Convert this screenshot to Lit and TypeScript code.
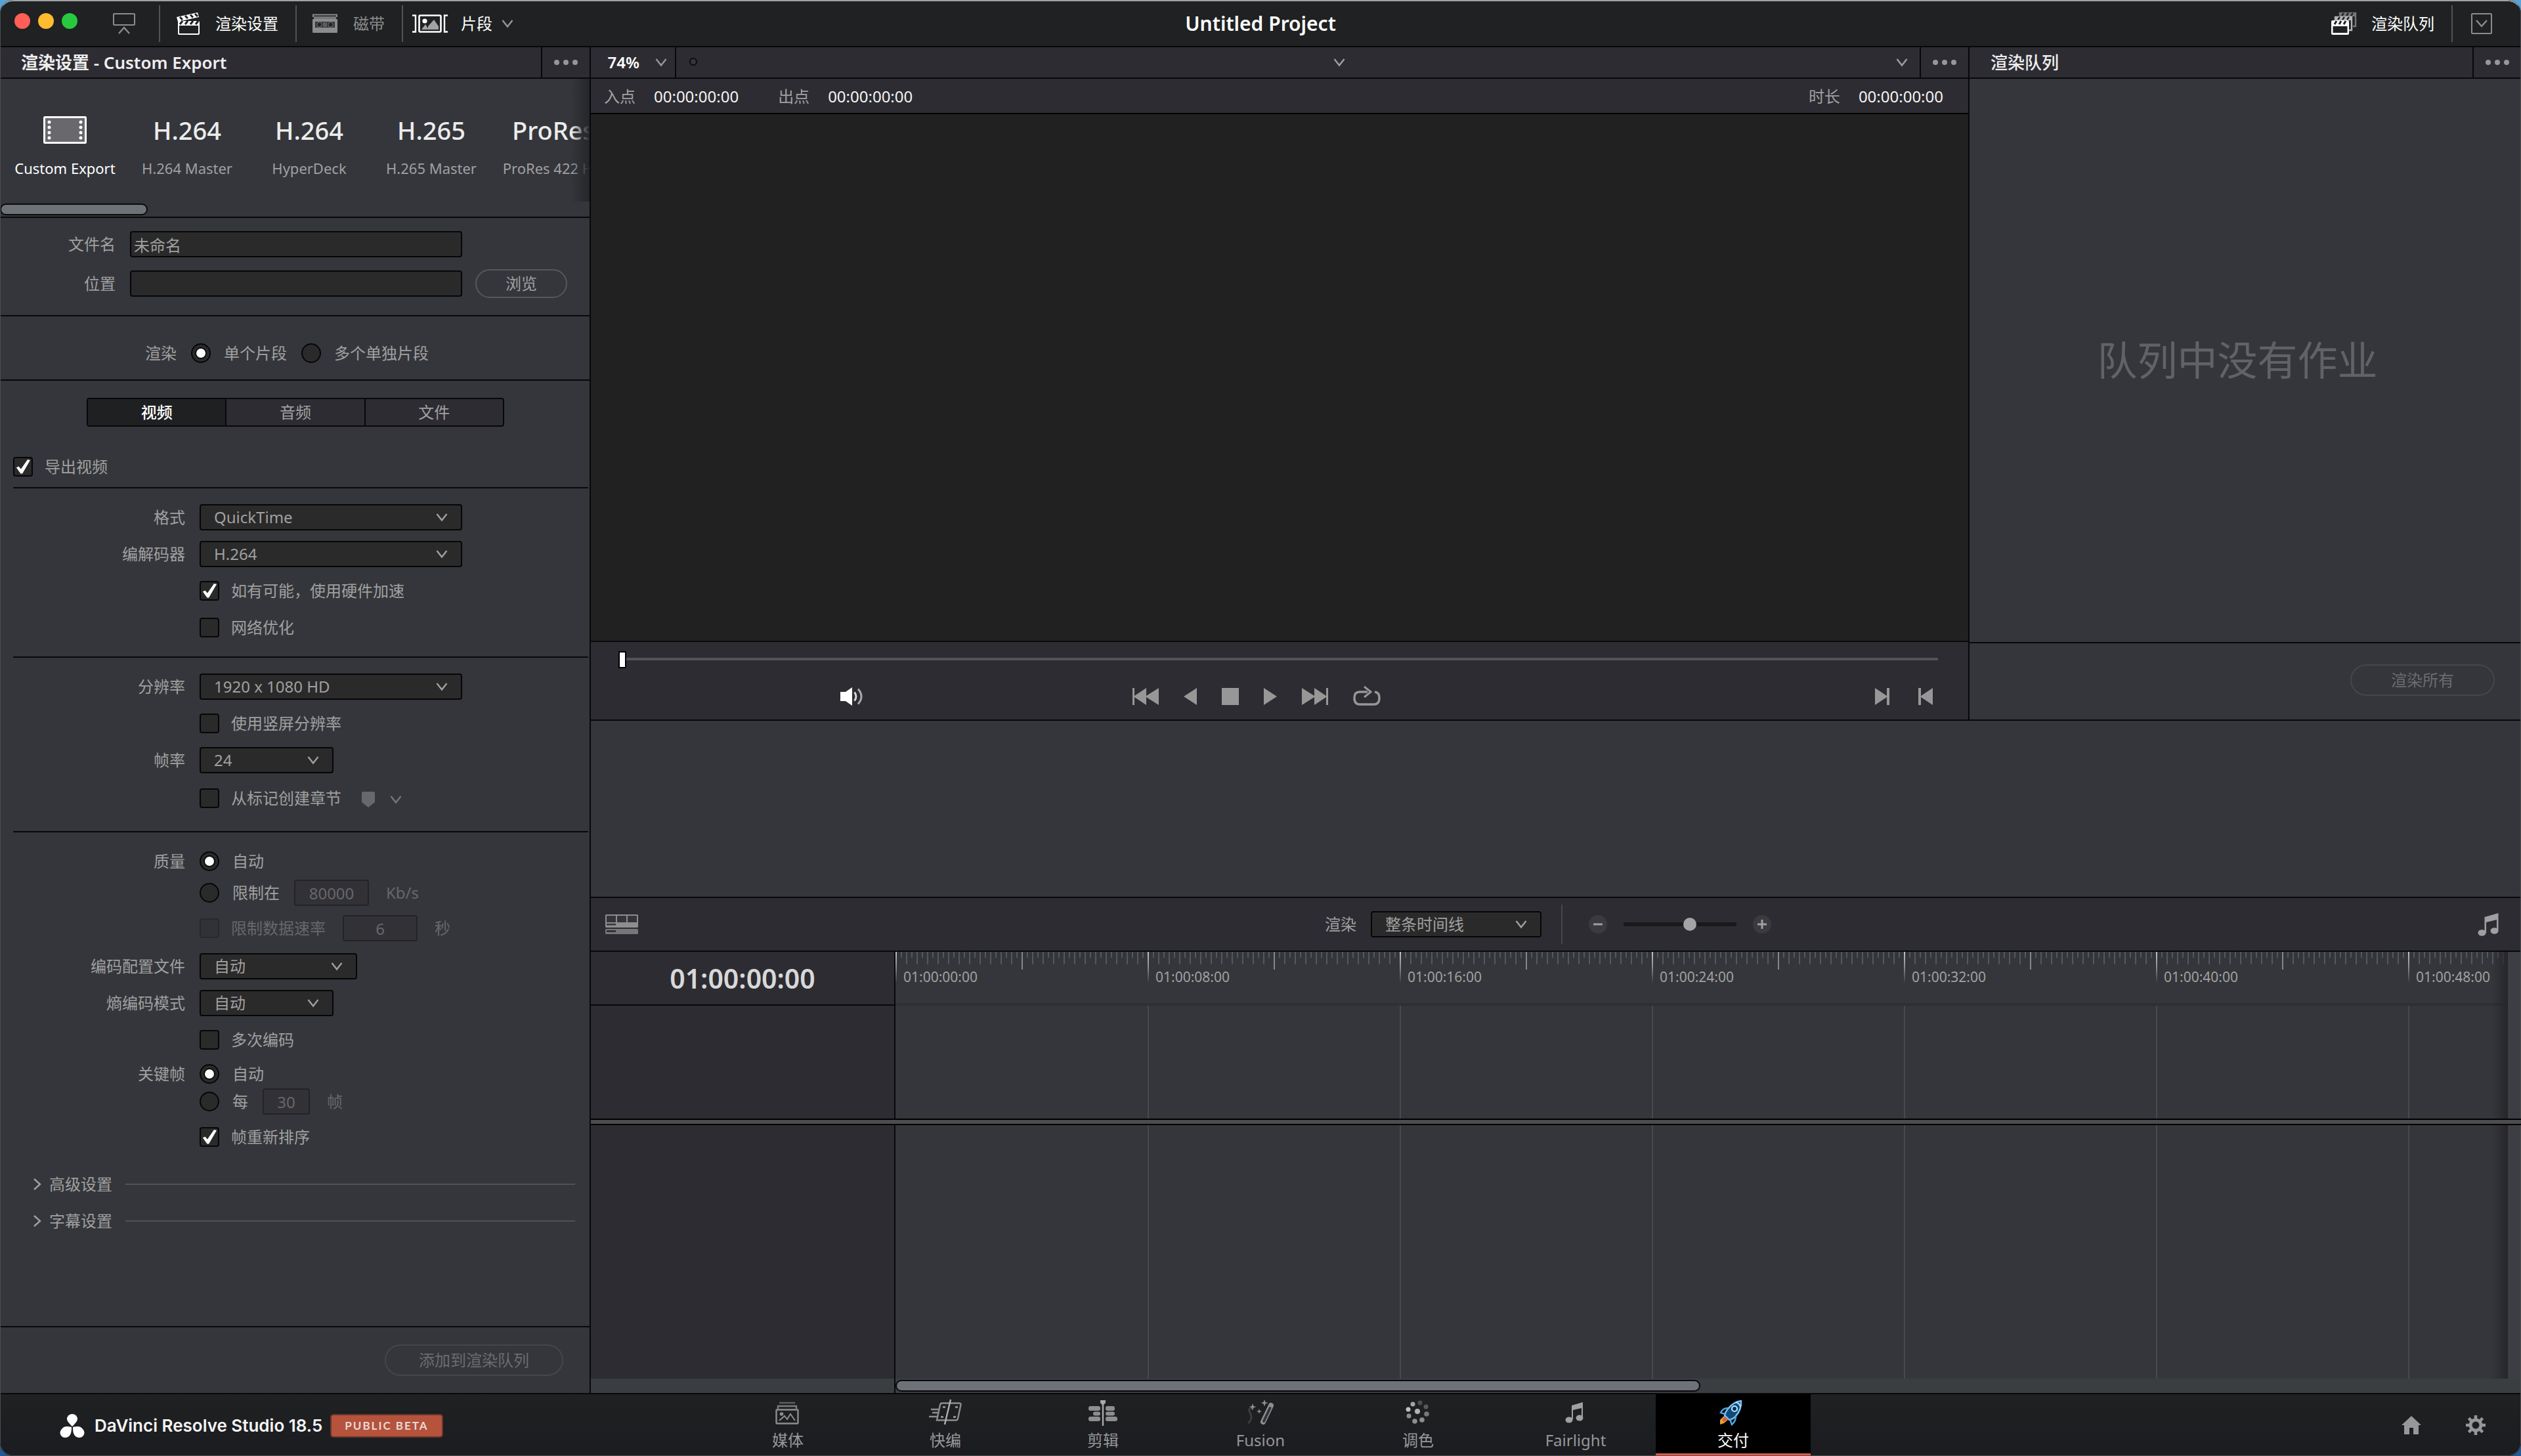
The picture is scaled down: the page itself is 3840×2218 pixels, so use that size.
import { LitElement, html, css, svg, nothing } from "lit";
import { customElement, state } from "lit/decorators.js";
import { classMap } from "lit/directives/class-map.js";

const chevronDown = html`<svg class="chev" width="18" height="14" viewBox="0 0 18 14" aria-hidden="true">
  <path d="M1.5 2 L9 11.5 L16.5 2" fill="none" stroke="currentColor" stroke-width="2.4" />
</svg>`;

const dots = html`<svg width="38" height="10" viewBox="0 0 38 10" aria-hidden="true">
  <circle cx="5" cy="5" r="4" fill="currentColor" />
  <circle cx="19" cy="5" r="4" fill="currentColor" />
  <circle cx="33" cy="5" r="4" fill="currentColor" />
</svg>`;

const clapper = html`<svg width="38" height="36" viewBox="0 0 38 36" aria-hidden="true">
  <path d="M1 8 L33 1 L35 8 L3 15 Z" fill="#fff" />
  <path d="M6 8 l4 4 M14 6 l4 4 M22 4.500 l4 4 M29 3 l4 4" stroke="#1f2122" stroke-width="3" />
  <rect x="3" y="14" width="33" height="21" rx="2" fill="#fff" />
  <path d="M10 14 l-4 5 M18 14 l-4 5 M26 14 l-4 5 M34 14 l-4 5" stroke="#1f2122" stroke-width="3" />
  <rect x="5" y="21" width="29" height="12" fill="#1f2122" />
</svg>`;

const tape = html`<svg width="38" height="30" viewBox="0 0 38 30" aria-hidden="true">
  <path d="M1 5 V1.500 H37 V5" fill="none" stroke="#8b8c8d" stroke-width="2" />
  <rect x="2" y="4" width="34" height="4" fill="#77787a" />
  <rect x="0" y="8" width="38" height="21" rx="1" fill="#8b8c8d" />
  <rect x="4" y="12" width="30" height="9" fill="#36373a" />
  <circle cx="10.500" cy="16.500" r="3.600" fill="#1f2122" stroke="#77787a" />
  <circle cx="27.500" cy="16.500" r="3.600" fill="#1f2122" stroke="#77787a" />
  <rect x="16" y="13" width="6" height="7" fill="#5b5c5e" />
</svg>`;

const clipIcon = html`<svg width="54" height="28" viewBox="0 0 54 28" aria-hidden="true">
  <path d="M0 1.500 H5 V26.500 H0 M54 1.500 H49 V26.500 H54" fill="none" stroke="#fff" stroke-width="2.400" />
  <rect x="10.500" y="1.500" width="33" height="25" rx="1.500" fill="none" stroke="#fff" stroke-width="2.600" />
  <circle cx="19" cy="10" r="3.600" fill="#fff" />
  <path d="M14 23 L20 15 L25 23 Z M24 23 V18 L33 8 L40 18 V23 Z" fill="#a2a3a4" />
</svg>`;

const queueIcon = html`<svg width="40" height="36" viewBox="0 0 40 36" aria-hidden="true">
  <path d="M14 6 V2 H38 V22 H34" fill="none" stroke="#77787a" stroke-width="2.400" />
  <path d="M14 1 H38 V7 H14 Z" fill="#77787a" />
  <path d="M20 2 l-3 4 M27 2 l-3 4 M34 2 l-3 4" stroke="#1f2122" stroke-width="2.400" />
  <path d="M7 13 V8 H32 V28 H28" fill="none" stroke="#b4b5b6" stroke-width="2.400" />
  <path d="M7 7 H32 V13 H7 Z" fill="#b4b5b6" />
  <path d="M14 8 l-3 4 M21 8 l-3 4 M28 8 l-3 4" stroke="#1f2122" stroke-width="2.400" />
  <rect x="1" y="13" width="27" height="22" rx="2" fill="#fff" />
  <path d="M9 14 l-3 5 M16 14 l-3 5 M23 14 l-3 5" stroke="#1f2122" stroke-width="3" />
  <rect x="3.500" y="22" width="22" height="10" fill="#1f2122" />
</svg>`;

const note = (w: number) => html`<svg width=${w} height=${Math.round(w * 1.1)} viewBox="0 0 32 35" aria-hidden="true">
  <path d="M10.500 6 L31.500 0 V27 H29 V10 L13 14 V30 H10.500 Z" fill="#a0a0a1" />
  <ellipse cx="6.500" cy="30" rx="6" ry="4.800" fill="#a0a0a1" />
  <ellipse cx="25.500" cy="27" rx="6" ry="4.800" fill="#a0a0a1" />
</svg>`;

const navIcons: Record<string, unknown> = {
  media: svg`<g fill="none" stroke="#8d8e90" stroke-width="2.400">
      <path d="M9 5 H33" stroke="#606164" /><path d="M7 14 V10 H35 V14" stroke="#7b7c7f" />
      <rect x="4.500" y="15.500" width="33" height="21" rx="1" />
      <path d="M9 32 L17 25 L21 30 L26 22 L33 32" stroke-width="2" /></g>
      <circle cx="12.500" cy="22" r="2.800" fill="#8d8e90" />`,
  cut: svg`<g fill="none" stroke="#8d8e90" stroke-width="2.400">
      <path d="M9 31.500 L14 8 Q14.500 5.500 17 5.500 H43 Q46 5.500 45.500 8 L41 29 Q40.500 31.500 38 31.500 Z" />
      <path d="M30 0 L21 38" stroke="#b0b1b3" />
      <path d="M0 15 H12 M2 20 H11 M-3 26 H10" /></g>
      <path d="M37 10 h4 v3 h-4 Z M34 25 h4 v3 h-4 Z M18 10 h4 v3 h-4 Z M15 25 h4 v3 h-4 Z" fill="#8d8e90" />`,
  edit: svg`<path d="M22 4 V40" stroke="#a9aaac" stroke-width="2.400" />
      <path d="M18 1 H26 V5 L22 9 L18 5 Z" fill="#a9aaac" />
      <g fill="#8d8e90"><rect x="0" y="10" width="18" height="7" rx="3" /><rect x="26" y="10" width="14" height="7" rx="3" />
      <rect x="7" y="18.500" width="11" height="6" rx="3" /><rect x="26" y="18.500" width="14" height="6" rx="3" />
      <rect x="0" y="26" width="18" height="7" rx="3" /><rect x="26" y="26" width="18" height="7" rx="3" /></g>`,
  fusion: svg`<path d="M38 9 L26 34" stroke="#8d8e90" stroke-width="8" stroke-linecap="round" />
      <path d="M36.500 13 L27 33" stroke="#34353a" stroke-width="4" stroke-linecap="round" />
      <path d="M3 36 Q11 30 6 20 Q2 12 10 14" fill="none" stroke="#3b3c40" stroke-width="3" />
      <path d="M28 0 l1.500 4 4 1 -4 1.500 -1.500 4 -1.500 -4 -4 -1.500 4 -1 Z M10 6 l1.500 4 4 1 -4 1.500 -1.500 4 -1.500 -4 -4 -1.500 4 -1 Z M20 14 l1 3 3 1 -3 1 -1 3 -1 -3 -3 -1 3 -1 Z" fill="#8d8e90" />`,
  color: svg`<g fill="#8d8e90"><circle cx="14" cy="7" r="3.500" fill="#a6a6a8" /><circle cx="25" cy="5" r="3.500" fill="#4e4f53" />
      <circle cx="34" cy="11" r="3.500" fill="#58595d" /><circle cx="7" cy="15" r="3.500" fill="#c0c0c2" /><circle cx="21" cy="18" r="4" fill="#b4b4b6" />
      <circle cx="35" cy="22" r="3.800" fill="#77787b" /><circle cx="8" cy="25" r="3.500" /><circle cx="28" cy="31" r="3.800" /><circle cx="17" cy="33" r="3.800" /></g>`,
  audio: svg`<path d="M16 9 L33 4 V27 H31 V13 L18 16 V30 H16 Z" fill="#a0a0a1" />
      <ellipse cx="12" cy="31" rx="5.500" ry="4.500" fill="#a0a0a1" /><ellipse cx="28" cy="28" rx="5.500" ry="4.500" fill="#a0a0a1" />`,
  deliver: svg`<path d="M34 2 Q23 3 14 14 Q10 19 9 24 L16 31 Q22 30 26 25 Q35 15 34 2 Z" fill="#0e4a7a" stroke="#7cc4f5" stroke-width="2.400" />
      <path d="M14 13 Q6 13 3 20 L9 22 M26 25 Q26 33 20 38 L17 30" fill="none" stroke="#4fa3dd" stroke-width="2.600" />
      <circle cx="24" cy="14" r="4" fill="#0a2c4c" stroke="#bfe3ff" stroke-width="2.200" />
      <path d="M26 4 Q32 6 33 11" stroke="#bfe3ff" stroke-width="2" fill="none" />
      <path d="M8 25 L2 31 V38 L8 36 L14 31 Z" fill="#e6a324" /><path d="M9 26 L5 31 L8 34 L14 30 Z" fill="#d65a4a" />`,
};

const pages = [
  { id: "media", label: "媒体" },
  { id: "cut", label: "快编" },
  { id: "edit", label: "剪辑" },
  { id: "fusion", label: "Fusion" },
  { id: "color", label: "调色" },
  { id: "audio", label: "Fairlight" },
  { id: "deliver", label: "交付" },
];

const presets = [
  { mark: "", label: "Custom Export" },
  { mark: "H.264", label: "H.264 Master" },
  { mark: "H.264", label: "HyperDeck" },
  { mark: "H.265", label: "H.265 Master" },
  { mark: "ProRes", label: "ProRes 422 HQ" },
];

const marks = ["00", "08", "16", "24", "32", "40", "48"].map((s) => `01:00:${s}:00`);

const base = css`
  :host {
    color: #a0a0a1;
    font: 24px/32px "Noto Sans", "Noto Sans CJK SC", sans-serif;
  }
  * {
    box-sizing: border-box;
  }
  svg {
    display: block;
    flex: none;
    overflow: visible;
  }
  button,
  input,
  select {
    font: inherit;
    color: inherit;
    margin: 0;
    border-radius: 0;
  }
  button {
    background: none;
    border: 0;
    padding: 0;
  }
  .head {
    display: flex;
    height: 48px;
    background: #2d2c32;
    border-bottom: 2px solid #08080a;
  }
  .head h2 {
    flex: 1;
    margin: 0;
    padding: 0 32px;
    font-size: 26px;
    line-height: 46px;
    font-weight: 600;
    color: #eeeeee;
    white-space: nowrap;
  }
  .more {
    width: 74px;
    border-left: 2px solid #08080a;
    display: grid;
    place-items: center;
    color: #97979a;
  }
  .pill {
    border: 2px solid #54585d;
    border-radius: 24px;
    height: 44px;
    width: 140px;
    line-height: 40px;
  }
  .pill.big {
    height: 48px;
    width: 220px;
    border-color: #45464b;
    color: #6b6b6f;
    line-height: 44px;
  }
  .pill.wide {
    width: 272px;
  }
  .pick {
    display: grid;
    align-items: center;
    width: 204px;
    height: 40px;
  }
  .pick > * {
    grid-area: 1 / 1;
  }
  .pick select {
    appearance: none;
    width: 100%;
    height: 40px;
    padding: 0 20px;
    background: #2a2a2a;
    border: 2px solid #060607;
    border-radius: 4px;
    outline: 0;
  }
  .pick .chev {
    justify-self: end;
    margin-right: 22px;
    pointer-events: none;
  }
`;

@customElement("render-settings")
class RenderSettings extends LitElement {
  @state() private tab = 0;

  static styles = [
    base,
    css`
      :host {
        display: flex;
        flex-direction: column;
        min-width: 0;
        background: #35363b;
        border-right: 2px solid #08080a;
      }
      .presets {
        position: relative;
        overflow: hidden;
        height: 212px;
        border-bottom: 2px solid #08080a;
      }
      .strip {
        display: flex;
        padding: 52px 0 0 6px;
      }
      .preset {
        flex: 0 0 186px;
        display: flex;
        flex-direction: column;
        align-items: center;
        gap: 16px;
        font-size: 22px;
        white-space: nowrap;
      }
      .mark {
        display: grid;
        place-items: center;
        height: 52px;
        font-size: 38px;
        font-weight: 500;
        color: #ececec;
      }
      .preset.on {
        color: #fff;
      }
      .fade {
        position: absolute;
        top: 0;
        right: 0;
        width: 28px;
        height: 187px;
        background: linear-gradient(90deg, transparent, #25262a);
      }
      .bar {
        position: absolute;
        left: 0;
        bottom: 2px;
        width: 25%;
        height: 18px;
        border: 2px solid #0a0a0c;
        border-radius: 9px;
        background: #6d7279;
      }
      .band {
        border-bottom: 2px solid #08080a;
      }
      .file {
        display: flex;
        flex-direction: column;
        gap: 16px;
        height: 150px;
        padding-top: 18px;
      }
      .line {
        display: flex;
        align-items: center;
        height: 44px;
        gap: 20px;
      }
      .lab {
        flex: none;
        margin-right: 2px;
        text-align: right;
        white-space: nowrap;
      }
      .file .lab {
        width: 176px;
      }
      .text {
        width: 506px;
        height: 40px;
        padding: 0 4px;
        background: #2a2a2a;
        border: 2px solid #060607;
        border-radius: 4px;
        outline: 0;
      }
      .mode {
        display: flex;
        align-items: center;
        height: 98px;
        padding: 16px 0 0 221px;
        gap: 22px;
      }
      .tabs {
        display: flex;
        width: 636px;
        height: 44px;
        margin: 26px auto 0 132px;
        border: 2px solid #08080a;
        border-radius: 4px;
        background: #2d2c32;
      }
      .tabs button {
        flex: 1;
        line-height: 38px;
      }
      .tabs button + button {
        border-left: 2px solid #08080a;
      }
      .tabs button.on {
        background: #1f2022;
        color: #fff;
        font-weight: 500;
      }
      .export {
        padding: 45px 0 15px 20px;
      }
      .group {
        margin: 0 2px 0 20px;
        border-top: 2px solid #08080a;
        padding: 16px 0;
      }
      .group .lab {
        width: 262px;
      }
      .row {
        display: flex;
        align-items: center;
        height: 56px;
        gap: 20px;
      }
      .row.near {
        height: 48px;
      }
      .row.far {
        height: 60px;
      }
      .row.snug {
        height: 36px;
      }
      .row.last {
        height: 72px;
      }
      .group.mid {
        padding-bottom: 20px;
      }
      .group.quality {
        padding: 20px 0 8px;
      }
      .opt {
        display: flex;
        align-items: center;
        gap: 18px;
        white-space: nowrap;
      }
      .opt.round {
        gap: 20px;
        margin-right: 2px;
      }
      .opt.off {
        margin-right: 6px;
      }
      .mode .opt.round {
        margin-right: 0;
      }
      input[type="checkbox"],
      input[type="radio"] {
        appearance: none;
        display: grid;
        place-items: center;
        width: 30px;
        height: 30px;
        background: #2a2a2a;
        border: 2px solid #060607;
        border-radius: 4px;
      }
      input[type="radio"] {
        border-radius: 50%;
      }
      input[type="radio"]:checked::before {
        content: "";
        width: 14px;
        height: 14px;
        border-radius: 50%;
        background: #fff;
        box-shadow: 0 0 0 2px #0c0c0d;
      }
      input[type="checkbox"]:checked::before {
        content: "";
        width: 22px;
        height: 22px;
        background: #fff;
        clip-path: polygon(4% 56%, 20% 48%, 36% 66%, 82% 0, 100% 4%, 46% 98%, 34% 98%);
      }
      .off {
        color: #67676b;
      }
      .off input[type="checkbox"] {
        background: #313237;
        border-color: #28292d;
      }
      .num {
        width: 114px;
        height: 40px;
        padding: 0;
        text-align: center;
        color: #67676b;
        background: #323136;
        border: 2px solid #232327;
        border-radius: 4px;
      }
      .num.small {
        width: 72px;
      }
      .unit {
        padding-left: 6px;
        color: #67676b;
      }
      .w-full {
        width: 400px;
      }
      .w-mid {
        width: 240px;
      }
      .marker {
        display: flex;
        align-items: center;
        gap: 22px;
        padding: 4px 0 0 10px;
        color: #77777a;
      }
      .fold {
        display: flex;
        align-items: center;
        width: 100%;
        height: 56px;
        padding: 0 22px 0 50px;
        gap: 12px;
      }
      .fold i {
        flex: 1;
        height: 2px;
        margin-left: 8px;
        background: #505257;
      }
      .foot {
        display: flex;
        align-items: center;
        justify-content: flex-end;
        height: 102px;
        margin-top: auto;
        padding-right: 40px;
        border-top: 2px solid #08080a;
      }
    `,
  ];

  private pick(id: string, value: string, size = "") {
    return html`<span class="pick ${size}"
      ><select id=${id}>
        <option>${value}</option></select
      >${chevronDown}</span
    >`;
  }

  private check(label: string, checked = false, disabled = false) {
    return html`<label class="opt ${disabled ? "off" : ""}"
      ><input type="checkbox" ?checked=${checked} ?disabled=${disabled} />${label}</label
    >`;
  }

  private radio(name: string, label: string, checked = false) {
    return html`<label class="opt round"><input type="radio" name=${name} ?checked=${checked} />${label}</label>`;
  }

  render() {
    return html`
      <header class="head">
        <h2>渲染设置 - Custom Export</h2>
        <button class="more" aria-label="更多">${dots}</button>
      </header>
      <div class="presets">
        <div class="strip">
          ${presets.map(
            (p, i) => html`<button class="preset ${i === 0 ? "on" : ""}">
              <span class="mark"
                >${p.mark ||
                html`<svg width="66" height="42" viewBox="0 0 66 42">
                  <rect x="1.500" y="1.500" width="63" height="39" rx="1" fill="#69696d" stroke="#fff" stroke-width="3" />
                  <path d="M9 9 V38 M57 9 V38" stroke="#fff" stroke-width="5" stroke-linecap="round" stroke-dasharray="0 8" />
                </svg>`}</span
              >
              <span>${p.label}</span>
            </button>`
          )}
        </div>
        <div class="fade"></div>
        <div class="bar"></div>
      </div>
      <div class="band file">
        <div class="line">
          <label class="lab" for="name">文件名</label>
          <input class="text" id="name" type="text" value="未命名" />
        </div>
        <div class="line">
          <label class="lab" for="place">位置</label>
          <input class="text" id="place" type="text" />
          <button class="pill">浏览</button>
        </div>
      </div>
      <div class="band mode">
        <span>渲染</span>
        ${this.radio("mode", "单个片段", true)} ${this.radio("mode", "多个单独片段")}
      </div>
      <div class="tabs" role="tablist">
        ${["视频", "音频", "文件"].map(
          (t, i) => html`<button
            role="tab"
            class=${classMap({ on: this.tab === i })}
            aria-selected=${this.tab === i}
            @click=${() => (this.tab = i)}
          >
            ${t}
          </button>`
        )}
      </div>
      <div class="export">${this.check("导出视频", true)}</div>
      <section class="group">
        <div class="row"><label class="lab" for="fmt">格式</label>${this.pick("fmt", "QuickTime", "w-full")}</div>
        <div class="row"><label class="lab" for="codec">编解码器</label>${this.pick("codec", "H.264", "w-full")}</div>
        <div class="row"><span class="lab"></span>${this.check("如有可能，使用硬件加速", true)}</div>
        <div class="row"><span class="lab"></span>${this.check("网络优化")}</div>
      </section>
      <section class="group mid">
        <div class="row"><label class="lab" for="res">分辨率</label>${this.pick("res", "1920 x 1080 HD", "w-full")}</div>
        <div class="row"><span class="lab"></span>${this.check("使用竖屏分辨率")}</div>
        <div class="row"><label class="lab" for="fps">帧率</label>${this.pick("fps", "24")}</div>
        <div class="row far">
          <span class="lab"></span>${this.check("从标记创建章节")}
          <button class="marker" aria-label="标记颜色" disabled>
            <svg width="22" height="26" viewBox="0 0 22 26">
              <path d="M3 1 H19 Q21 1 21 3 V17 L11 25 L1 17 V3 Q1 1 3 1 Z" fill="#67686c" />
            </svg>
            ${chevronDown}
          </button>
        </div>
      </section>
      <section class="group quality">
        <div class="row near"><span class="lab">质量</span>${this.radio("quality", "自动", true)}</div>
        <div class="row near">
          <span class="lab"></span>${this.radio("quality", "限制在")}
          <input class="num" aria-label="限制在" value="80000" disabled />
          <span class="unit">Kb/s</span>
        </div>
        <div class="row far">
          <span class="lab"></span>${this.check("限制数据速率", false, true)}
          <input class="num" aria-label="限制数据速率" value="6" disabled />
          <span class="unit">秒</span>
        </div>
        <div class="row"><label class="lab" for="profile">编码配置文件</label>${this.pick("profile", "自动", "w-mid")}</div>
        <div class="row"><label class="lab" for="entropy">熵编码模式</label>${this.pick("entropy", "自动")}</div>
        <div class="row"><span class="lab"></span>${this.check("多次编码")}</div>
        <div class="row near"><span class="lab">关键帧</span>${this.radio("key", "自动", true)}</div>
        <div class="row snug">
          <span class="lab"></span>${this.radio("key", "每")}
          <input class="num small" aria-label="每" value="30" disabled />
          <span class="unit">帧</span>
        </div>
        <div class="row last"><span class="lab"></span>${this.check("帧重新排序", true)}</div>
      </section>
      ${["高级设置", "字幕设置"].map(
        (t) => html`<button class="fold" aria-expanded="false">
          <svg width="13" height="18" viewBox="0 0 13 18">
            <path d="M2 1 L11 9 L2 17" fill="none" stroke="currentColor" stroke-width="2.400" />
          </svg>
          ${t}<i></i>
        </button>`
      )}
      <footer class="foot"><button class="pill big wide" disabled>添加到渲染队列</button></footer>
    `;
  }
}

@customElement("clip-viewer")
class ClipViewer extends LitElement {
  static styles = [
    base,
    css`
      :host {
        display: flex;
        flex-direction: column;
        min-width: 0;
        background: #212121;
        border-right: 2px solid #08080a;
      }
      .zoom {
        display: flex;
        align-items: center;
        justify-content: flex-end;
        gap: 24px;
        width: 130px;
        padding-right: 12px;
        color: #97979a;
        border-right: 2px solid #08080a;
      }
      .zoom b {
        font-weight: 600;
        color: #fff;
      }
      .source {
        flex: 1;
        display: grid;
        grid-template-columns: 968fr auto 845fr;
        align-items: center;
        padding: 0 18px 0 20px;
      }
      .source button:last-child {
        justify-self: end;
      }
      .times {
        display: flex;
        align-items: center;
        height: 54px;
        padding: 2px 38px 0 20px;
        gap: 28px;
        background: #2d2c32;
        border-bottom: 2px solid #000;
      }
      .times b {
        font-weight: 400;
        color: #f4f4f4;
      }
      .times .out {
        margin-left: 32px;
      }
      .times .dur {
        margin-left: auto;
      }
      .screen {
        flex: 1;
      }
      .deck {
        height: 122px;
        background: #2d2c32;
        border-top: 2px solid #08080a;
        border-bottom: 2px solid #08080a;
      }
      .scrub {
        display: block;
        appearance: none;
        width: calc(100% - 88px);
        height: 26px;
        margin: 14px 0 0 42px;
        background: linear-gradient(#505358, #505358) 0 10px / 100% 4px no-repeat;
      }
      .scrub::-webkit-slider-thumb {
        appearance: none;
        width: 12px;
        height: 26px;
        background: #fff;
        border: 2px solid #000;
      }
      .keys {
        display: grid;
        grid-template-columns: 826fr auto 896fr;
        align-items: center;
        height: 30px;
        margin-top: 28px;
        color: #979797;
      }
      .vol {
        display: flex;
        padding-left: 46%;
      }
      .set {
        display: flex;
        align-items: center;
        gap: 38px;
      }
      .set.marks {
        justify-content: flex-end;
        gap: 44px;
        padding-right: 54px;
      }
    `,
  ];

  private key(label: string, w: number, d: string) {
    return html`<button aria-label=${label}>
      <svg width=${w} height="26" viewBox="0 0 ${w} 26"><path d=${d} fill="currentColor" /></svg>
    </button>`;
  }

  render() {
    return html`
      <header class="head">
        <button class="zoom"><b>74%</b>${chevronDown}</button>
        <div class="source">
          <svg width="14" height="14" viewBox="0 0 14 14">
            <circle cx="6" cy="6" r="5" fill="#35353a" stroke="#0c0c0e" stroke-width="2" />
          </svg>
          <button aria-label="选择时间线">${chevronDown}</button>
          <button aria-label="查看模式">${chevronDown}</button>
        </div>
        <button class="more" aria-label="更多">${dots}</button>
      </header>
      <div class="times">
        <span>入点</span><b>00:00:00:00</b> <span class="out">出点</span><b>00:00:00:00</b>
        <span class="dur">时长</span><b>00:00:00:00</b>
      </div>
      <div class="screen"></div>
      <div class="deck">
        <input class="scrub" type="range" aria-label="播放位置" min="0" max="100" value="0" />
        <div class="keys">
          <div class="vol">
            <button aria-label="音量">
              <svg width="36" height="28" viewBox="0 0 36 28">
                <path d="M0 7 H8 L18 0 V28 L8 21 H0 Z" fill="#fff" />
                <path d="M21.500 7.500 Q26.500 14 21.500 20.500" fill="none" stroke="#d6d6d7" stroke-width="3" />
                <path d="M27 2.500 Q37 14 27 25.500" fill="none" stroke="#a9a9ab" stroke-width="3" />
              </svg>
            </button>
          </div>
          <div class="set">
            ${this.key("第一帧", 40, "M0 0 H3 V12 L21 0 V12 L40 0 V26 L21 14 V26 L3 14 V26 H0 Z")}
            ${this.key("倒放", 20, "M20 0 V26 L0 13 Z")} ${this.key("停止", 26, "M0 0 H26 V26 H0 Z")}
            ${this.key("播放", 20, "M0 0 V26 L20 13 Z")}
            ${this.key("最后一帧", 40, "M40 0 H37 V12 L19 0 V12 L0 0 V26 L19 14 V26 L37 14 V26 H40 Z")}
            <button aria-label="循环">
              <svg width="42" height="30" viewBox="0 0 42 30">
                <path
                  d="M22 8 H10 Q2 8 2 17 Q2 27 10 27 H32 Q40 27 40 17 Q40 9 33 8"
                  fill="none"
                  stroke="currentColor"
                  stroke-width="3.400"
                />
                <path d="M17 0 L27 8 L17 16" fill="none" stroke="currentColor" stroke-width="3" />
              </svg>
            </button>
          </div>
          <div class="set marks">
            ${this.key("下一标记", 22, "M0 0 L18 12 V0 H22 V26 H18 V14 L0 26 Z")}
            ${this.key("上一标记", 22, "M22 0 L4 12 V0 H0 V26 H4 V14 L22 26 Z")}
          </div>
        </div>
      </div>
    `;
  }
}

@customElement("render-queue")
class RenderQueue extends LitElement {
  static styles = [
    base,
    css`
      :host {
        display: flex;
        flex-direction: column;
        min-width: 0;
        background: #35363b;
        border-bottom: 2px solid #08080a;
      }
      .head h2 {
        font-weight: 500;
      }
      .empty {
        flex: 1;
        display: grid;
        place-items: center;
        padding-right: 24px;
        font-size: 61px;
        line-height: 80px;
        color: #626266;
      }
      .foot {
        display: flex;
        justify-content: flex-end;
        height: 118px;
        padding: 32px 40px 0;
        border-top: 2px solid #08080a;
      }
    `,
  ];

  render() {
    return html`
      <header class="head">
        <h2>渲染队列</h2>
        <button class="more" aria-label="更多">${dots}</button>
      </header>
      <div class="empty">队列中没有作业</div>
      <footer class="foot"><button class="pill big" disabled>渲染所有</button></footer>
    `;
  }
}

@customElement("time-line")
class TimeLine extends LitElement {
  static styles = [
    base,
    css`
      :host {
        display: flex;
        flex-direction: column;
        min-width: 0;
        background: #35363b;
      }
      .clips {
        flex: 268;
      }
      .tools {
        display: flex;
        align-items: center;
        height: 84px;
        padding: 0 34px 0 22px;
        background: #2d2c32;
        border-top: 2px solid #08080a;
        border-bottom: 2px solid #08080a;
      }
      .scope {
        display: flex;
        align-items: center;
        gap: 22px;
        margin-left: 1046px;
      }
      .scope .pick {
        width: 260px;
      }
      .zoomer {
        display: flex;
        align-items: center;
        gap: 25px;
        height: 60px;
        margin-left: 30px;
        padding-left: 40px;
        border-left: 2px solid #45464b;
      }
      .range {
        appearance: none;
        width: 172px;
        height: 22px;
        background: linear-gradient(#1a1a1c, #1a1a1c) 0 8px / 100% 6px no-repeat;
      }
      .range::-webkit-slider-thumb {
        appearance: none;
        width: 20px;
        height: 20px;
        border-radius: 50%;
        background: #a4a4a5;
      }
      .music {
        margin-left: auto;
      }
      .body {
        position: relative;
        flex: 672;
        display: grid;
        grid-template-columns: minmax(0, 464fr) minmax(0, 2456fr) minmax(0, 20fr);
        grid-template-rows: 82px 172fr 10px 386fr 22px;
      }
      .side {
        background: #2d2c32;
        border-right: 2px solid #08080a;
      }
      .clock {
        display: grid;
        place-items: center;
        font-size: 41px;
        font-weight: 600;
        color: #d8d8d8;
        border-bottom: 2px solid #08080a;
      }
      .ruler {
        display: flex;
        min-width: 0;
        overflow: hidden;
        border-bottom: 4px solid #2f2f32;
      }
      .cell {
        flex: 0 0 384px;
        padding: 24px 0 0 12px;
        font-size: 21px;
        line-height: 28px;
        background:
          linear-gradient(#c4c4c5, #8a8a8c 50%, transparent) 0 0 / 2px 48px no-repeat,
          linear-gradient(#85868a, #85868a) 192px 0 / 2px 27px no-repeat,
          linear-gradient(90deg, #55575c 2px, transparent 2px) 0 0 / 16px 19px repeat-x,
          linear-gradient(90deg, #55575c 2px, transparent 2px) 8px 0 / 16px 9px repeat-x;
      }
      .cell:last-child {
        flex: 1 0 auto;
      }
      .lane {
        background: linear-gradient(90deg, #47494e 2px, transparent 2px) 0 0 / 384px 100% repeat-x;
        box-shadow: inset 2px 0 #35363b;
      }
      .strip {
        background: #3c3e43;
      }
      .split {
        grid-column: 1 / -1;
        z-index: 1;
        background: #4d4d4d;
        border-top: 2px solid #000;
        border-bottom: 2px solid #000;
      }
      .side.tray {
        background: #3b3e41;
      }
      .tray.main {
        grid-column: 2 / -1;
        padding: 2px 0;
        background: #3b3e41;
      }
      .thumb {
        width: 1226px;
        height: 18px;
        border: 2px solid #08080a;
        border-radius: 9px;
        background: #6d7279;
      }
      .shade {
        position: absolute;
        top: 0;
        right: 20px;
        bottom: 22px;
        width: 24px;
        background: linear-gradient(90deg, transparent, #26262a);
        pointer-events: none;
      }
    `,
  ];

  private zoomKey(label: string, plus: boolean) {
    return html`<button aria-label=${label}>
      <svg width="28" height="28" viewBox="0 0 28 28">
        <circle cx="14" cy="14" r="14" fill="#3a3a3f" />
        <path d="M7 12.500 H21 V15.500 H7 Z" fill="#a0a0a1" />
        ${plus ? svg`<path d="M12.500 7 V21 H15.500 V7 Z" fill="#a0a0a1" />` : nothing}
      </svg>
    </button>`;
  }

  render() {
    return html`
      <div class="clips"></div>
      <div class="tools">
        <button aria-label="时间线视图">
          <svg width="50" height="30" viewBox="0 0 50 30">
            <rect width="50" height="20" rx="1.500" fill="#8d8d8e" />
            <path d="M2 2 H16 V12 H2 Z M18 2 H32 V12 H18 Z M34 2 H48 V12 H34 Z M2 14 H16 V16.500 H2 Z" fill="#343439" />
            <rect y="22" width="50" height="8" rx="1.500" fill="#77777a" />
            <path d="M2 24 H16 V27 H2 Z" fill="#343439" />
          </svg>
        </button>
        <div class="scope">
          <label for="scope">渲染</label>
          <span class="pick"
            ><select id="scope">
              <option>整条时间线</option></select
            >${chevronDown}</span
          >
        </div>
        <div class="zoomer">
          ${this.zoomKey("缩小", false)}
          <input class="range" type="range" aria-label="缩放" min="0" max="100" value="60" />
          ${this.zoomKey("放大", true)}
        </div>
        <button class="music" aria-label="音频">${note(32)}</button>
      </div>
      <div class="body">
        <div class="side clock">01:00:00:00</div>
        <div class="ruler">${marks.map((m) => html`<div class="cell">${m}</div>`)}</div>
        <div class="strip"></div>
        <div class="side"></div>
        <div class="lane"></div>
        <div class="strip"></div>
        <div class="split"></div>
        <div class="side"></div>
        <div class="lane"></div>
        <div class="strip"></div>
        <div class="side tray"></div>
        <div class="tray main"><div class="thumb"></div></div>
        <div class="shade"></div>
      </div>
    `;
  }
}

@customElement("app-root")
class AppRoot extends LitElement {
  @state() private page = "deliver";

  static styles = [
    base,
    css`
      :host {
        display: block;
        background: linear-gradient(#5aa3d6, #245a93);
      }
      .window {
        position: relative;
        display: flex;
        flex-direction: column;
        min-height: 100vh;
        overflow: hidden;
        border-radius: 20px;
        background: #1f2122;
      }
      .window::after {
        content: "";
        position: absolute;
        inset: 0;
        border: 1px solid #4c4d50;
        border-top: 2px solid #a0a2a3;
        border-radius: 20px;
        pointer-events: none;
      }
      .top {
        display: grid;
        grid-template-columns: 1fr auto 1fr;
        height: 72px;
        border-bottom: 2px solid #08080a;
      }
      .top h1 {
        margin: 0;
        font-size: 30px;
        line-height: 72px;
        font-weight: 600;
        color: #fff;
      }
      .tools {
        display: flex;
        align-items: center;
        height: 72px;
      }
      .tools.end {
        justify-content: flex-end;
        padding-right: 44px;
      }
      .lights {
        margin: 0 54px 8px 22px;
      }
      .tool {
        display: flex;
        align-items: center;
        height: 56px;
        gap: 22px;
        padding: 0 26px 0 24px;
        border-left: 2px solid #505255;
        color: #fff;
        white-space: nowrap;
      }
      .tool.muted {
        color: #8b8c8d;
        gap: 24px;
      }
      .tool.clip {
        padding-left: 14px;
        gap: 20px;
      }
      .tool.clip .chev {
        margin-left: -6px;
        color: #97979a;
      }
      .tool.plain {
        border-left: 0;
      }
      .tool.box {
        padding: 0 0 0 28px;
      }
      .screen {
        margin-right: 36px;
      }
      .work {
        flex: 1;
        display: grid;
        grid-template-columns: minmax(0, 900fr) minmax(0, 2100fr) minmax(0, 840fr);
        grid-template-rows: 1026fr 1024fr;
      }
      render-settings {
        grid-row: 1 / 3;
      }
      time-line {
        grid-column: 2 / 4;
      }
      .dock {
        display: grid;
        grid-template-columns: 1fr auto 1fr;
        height: 96px;
        border-top: 2px solid #08080a;
        background: linear-gradient(#1f2122, #1b1c20);
      }
      .brand {
        display: flex;
        align-items: center;
        gap: 16px;
        padding: 2px 0 0 92px;
        font: 600 26px/32px Inter, sans-serif;
        color: #f4f4f4;
        white-space: nowrap;
      }
      .beta {
        margin-left: -4px;
        padding: 0 20px;
        font: 700 17px/32px Lato, sans-serif;
        letter-spacing: 2px;
        color: #ead9d5;
        background: #b5533d;
        border: 2px solid #6b3629;
        border-radius: 5px;
      }
      .pages {
        display: flex;
        gap: 4px;
      }
      .page {
        display: flex;
        flex-direction: column;
        align-items: center;
        width: 236px;
        padding-top: 8px;
        gap: 4px;
        border-bottom: 4px solid transparent;
        color: #97979a;
      }
      .page.on {
        background: #000;
        color: #fff;
        border-bottom-color: #de5a49;
      }
      .system {
        display: flex;
        align-items: center;
        justify-content: flex-end;
        gap: 68px;
        padding-right: 54px;
      }
    `,
  ];

  render() {
    return html`
      <div class="window">
        <header class="top">
          <div class="tools">
            <svg class="lights" width="96" height="24" viewBox="0 0 96 24" aria-hidden="true">
              <circle cx="12" cy="12" r="12" fill="#ff5f57" />
              <circle cx="48" cy="12" r="12" fill="#febc2e" />
              <circle cx="84" cy="12" r="12" fill="#28c840" />
            </svg>
            <button class="screen" aria-label="全屏">
              <svg width="34" height="32" viewBox="0 0 34 32">
                <rect x="1" y="1" width="32" height="17" rx="1" fill="none" stroke="#8b8c8d" stroke-width="2" />
                <path d="M9 31 L17 22 L25 31" fill="none" stroke="#8b8c8d" stroke-width="2.400" />
              </svg>
            </button>
            <button class="tool">${clapper}渲染设置</button>
            <button class="tool muted">${tape}磁带</button>
            <button class="tool clip">${clipIcon}片段${chevronDown}</button>
          </div>
          <h1>Untitled Project</h1>
          <div class="tools end">
            <button class="tool plain">${queueIcon}渲染队列</button>
            <button class="tool box" aria-label="展开">
              <svg width="32" height="32" viewBox="0 0 32 32">
                <rect x="1" y="1" width="30" height="30" rx="1" fill="none" stroke="#8b8c8d" stroke-width="2" />
                <path d="M8 11 L16 20 L24 11" fill="none" stroke="#8b8c8d" stroke-width="2.400" />
              </svg>
            </button>
          </div>
        </header>
        <main class="work">
          <render-settings></render-settings>
          <clip-viewer></clip-viewer>
          <render-queue></render-queue>
          <time-line></time-line>
        </main>
        <footer class="dock">
          <div class="brand">
            <svg width="36" height="36" viewBox="0 0 36 36" aria-hidden="true">
              <g fill="#fff">
                <path d="M18 19 C12 13 10 10 10 7.500 A8 7.500 0 0 1 26 7.500 C26 10 24 13 18 19 Z" />
                <path d="M17 20 C8 18 5 19 2 23 A8 7.500 0 0 0 13 34 C16 31 17 28 17 20 Z" />
                <path d="M19 20 C28 18 31 19 34 23 A8 7.500 0 0 1 23 34 C20 31 19 28 19 20 Z" />
              </g>
            </svg>
            <span>DaVinci Resolve Studio 18.5</span>
            <span class="beta">PUBLIC BETA</span>
          </div>
          <nav class="pages">
            ${pages.map(
              (p) => html`<button class=${classMap({ page: true, on: this.page === p.id })} @click=${() => (this.page = p.id)}>
                <svg width="44" height="42" viewBox="0 0 44 42" aria-hidden="true">${navIcons[p.id]}</svg>
                <span>${p.label}</span>
              </button>`
            )}
          </nav>
          <div class="system">
            <button aria-label="项目管理器">
              <svg width="30" height="28" viewBox="0 0 30 28">
                <path d="M15 0 L30 14 H26 V28 H18 V18 H12 V28 H4 V14 H0 Z" fill="#97979a" />
              </svg>
            </button>
            <button aria-label="项目设置">
              <svg width="30" height="30" viewBox="0 0 30 30">
                <circle cx="15" cy="15" r="8" fill="none" stroke="#97979a" stroke-width="5" />
                <path
                  d="M15 0 V6 M15 24 V30 M0 15 H6 M24 15 H30 M4.400 4.400 L8.600 8.600 M21.400 21.400 L25.600 25.600 M4.400 25.600 L8.600 21.400 M21.400 8.600 L25.600 4.400"
                  stroke="#97979a"
                  stroke-width="4.500"
                />
              </svg>
            </button>
          </div>
        </footer>
      </div>
    `;
  }
}
